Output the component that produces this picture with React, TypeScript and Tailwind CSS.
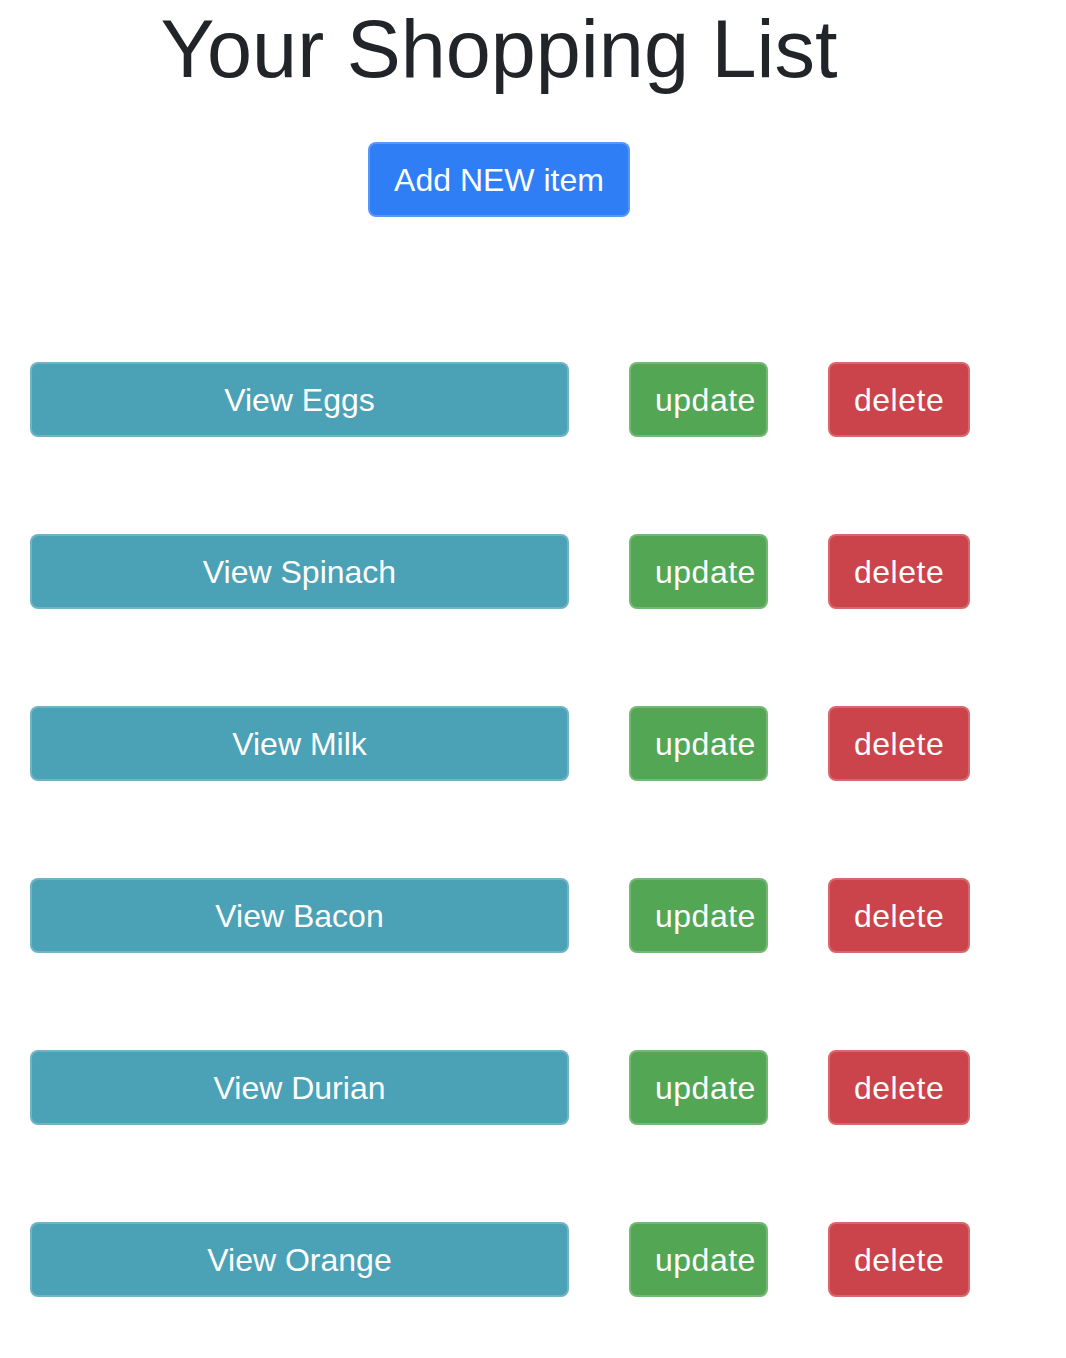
const ITEMS = ["Eggs", "Spinach", "Milk", "Bacon", "Durian", "Orange"];

const BTN =
  "h-[75px] shrink-0 rounded-[8px] border-2 border-white/20 px-[24px] text-[32px] leading-[48px] text-white whitespace-nowrap";

function ItemRow({ name }: { name: string }) {
  return (
    <div className="flex items-center gap-[60px]">
      <button className={`${BTN} w-[539px] bg-[#4ba1b6] text-center`}>View {name}</button>
      <button className={`${BTN} w-[139px] bg-[#53a653] text-left tracking-[0.5px]`}>update</button>
      <button className={`${BTN} w-[142px] bg-[#cc444b] text-center tracking-[0.5px]`}>delete</button>
    </div>
  );
}

export default function App() {
  return (
    <div
      className="min-h-[1358px] bg-white"
      style={{ fontFamily: '"Liberation Sans", Arial, sans-serif' }}
    >
      <div className="w-[938px] ml-[30px]">
        {/* HEADER */}
        <div className="flex flex-col items-center">
          <h1 className="mt-[1px] text-[81px] leading-[96px] font-normal text-[#212529]">
            Your Shopping List
          </h1>
          <button className={`${BTN} mt-[45px] bg-[#2f7ef6]`}>Add NEW item</button>
        </div>

        {/* LIST */}
        <div className="mt-[145px] flex flex-col gap-[97px]">
          {ITEMS.map((item) => (
            <ItemRow key={item} name={item} />
          ))}
        </div>
      </div>
    </div>
  );
}
